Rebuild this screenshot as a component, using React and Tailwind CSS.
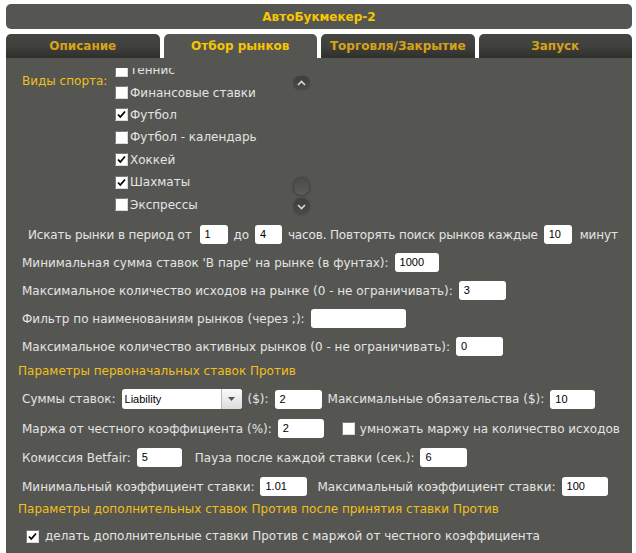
import React from "react";

const Input = ({ w, v }) => (
  <div
    className={`h-[19px] bg-white rounded-[3px] flex items-center pl-[5px] text-[11px] tracking-normal text-black font-['Liberation_Sans',sans-serif] shrink-0 ${w}`}
  >
    {v}
  </div>
);

const Check = ({ on }) => (
  <div className="w-[13px] h-[13px] bg-white border border-t-[#7a7a7a] border-l-[#7a7a7a] border-r-[#d8d8d8] border-b-[#d8d8d8] flex items-center justify-center shrink-0">
    {on && (
      <svg width="9" height="9" viewBox="0 0 9 9">
        <path d="M1 4.5 L3.3 7 L8 1.5" stroke="#000" strokeWidth="1.8" fill="none" />
      </svg>
    )}
  </div>
);

const Tab = ({ label, active }) => (
  <div
    className={`flex-1 h-[24px] rounded-t-[5px] flex items-center justify-center font-bold text-[12px] ${
      active
        ? "bg-[#555651] text-[#f7c600]"
        : "bg-gradient-to-b from-[#454642] via-[#40413d] to-[#2f302c] text-[#d6a318]"
    }`}
  >
    {label}
  </div>
);

const ScrollBtn = ({ up }) => (
  <div className="w-[17px] h-[17px] rounded-full bg-gradient-to-b from-[#3f403c] to-[#4a4b47] shadow-[0_0_1px_#2f302c] flex items-center justify-center">
    <svg width="9" height="6" viewBox="0 0 9 6">
      <path
        d={up ? "M1 5 L4.5 1.5 L8 5" : "M1 1 L4.5 4.5 L8 1"}
        stroke="#d8d8d8"
        strokeWidth="1.6"
        fill="none"
      />
    </svg>
  </div>
);

const sports = [
  ["Теннис", false],
  ["Финансовые ставки", false],
  ["Футбол", true],
  ["Футбол - календарь", false],
  ["Хоккей", true],
  ["Шахматы", true],
  ["Экспрессы", false],
];

export default function App() {
  return (
    <div className="w-[636px] h-[553px] bg-white overflow-hidden pt-[4px] pl-[6px] pr-[4px] font-['DejaVu_Sans',sans-serif] text-[12px] text-[#e4e4e4] whitespace-nowrap">
      <div className="h-[25px] rounded-[5px] bg-[#555651] flex items-center justify-center font-bold text-[12px] text-[#f7c600]">
        АвтоБукмекер-2
      </div>
      <div className="flex gap-[4px] mt-[5px]">
        <Tab label="Описание" />
        <Tab label="Отбор рынков" active />
        <Tab label="Торговля/Закрытие" />
        <Tab label="Запуск" />
      </div>
      <div className="h-[495px] bg-[#555651] pt-[10px] flex flex-col">
        {/* sports */}
        <div className="flex h-[147px]">
          <div className="w-[109px] pl-[16px] pt-[4px] text-[#f2bf1c]">Виды спорта:</div>
          <div className="w-[165px] h-[147px] overflow-hidden">
            <div className="-mt-[9px] flex flex-col">
              {sports.map(([n, on]) => (
                <div key={n} className="h-[22.4px] flex items-center gap-[2px]">
                  <Check on={on} />
                  <span>{n}</span>
                </div>
              ))}
            </div>
          </div>
          <div className="w-[17px] ml-[13px] flex flex-col items-center pt-[8px]">
            <ScrollBtn up />
            <div className="mt-[87px] w-[17px] h-[22px] rounded-[9px] bg-gradient-to-b from-[#4a4b47] to-[#5c5d59] border border-[#454642] shadow-[0_0_2px_#3a3b37]" />
            <div className="mt-[2px]">
              <ScrollBtn />
            </div>
          </div>
        </div>

        <div className="flex flex-col gap-[9px] mt-[10px] pl-[16px]">
          <div className="flex items-center gap-[6px] pl-[6px] tracking-[-0.15px]">
            <span>Искать рынки в период от</span>
            <Input w="w-[28px] ml-[2px]" v="1" />
            <span>до</span>
            <Input w="w-[27px]" v="4" />
            <span>часов. Повторять поиск рынков каждые</span>
            <Input w="w-[28px]" v="10" />
            <span className="ml-[2px]">минут</span>
          </div>
          <div className="flex items-center gap-[6px]">
            <span>Минимальная сумма ставок 'В паре' на рынке (в фунтах):</span>
            <Input w="w-[44px]" v="1000" />
          </div>
          <div className="flex items-center gap-[6px]">
            <span>Максимальное количество исходов на рынке (0 - не ограничивать):</span>
            <Input w="w-[47px]" v="3" />
          </div>
          <div className="flex items-center gap-[6px]">
            <span>Фильтр по наименованиям рынков (через ;):</span>
            <Input w="w-[95px]" v="" />
          </div>
          <div className="flex items-center gap-[6px]">
            <span>Максимальное количество активных рынков (0 - не ограничивать):</span>
            <Input w="w-[47px]" v="0" />
          </div>
        </div>

        <div className="mt-[7px] pl-[12px] h-[16px] leading-[16px] text-[#f2bf1c]">
          Параметры первоначальных ставок Против
        </div>

        <div className="flex flex-col gap-[10px] mt-[10px] pl-[16px]">
          <div className="flex items-center gap-[6px]">
            <span>Суммы ставок:</span>
            <div className="w-[120px] h-[20px] bg-white rounded-[3px] flex items-stretch shrink-0">
              <div className="flex-1 flex items-center pl-[3px] text-[11px] text-black font-['Liberation_Sans',sans-serif]">
                Liability
              </div>
              <div className="w-[21px] border-l border-[#b8b8b8] bg-gradient-to-b from-[#fafafa] to-[#dcdcdc] rounded-r-[3px] flex items-center justify-center">
                <svg width="7" height="4" viewBox="0 0 7 4">
                  <path d="M0 0 L7 0 L3.5 4 Z" fill="#555" />
                </svg>
              </div>
            </div>
            <span>($):</span>
            <Input w="w-[47px]" v="2" />
            <span>Максимальные обязательства ($):</span>
            <Input w="w-[45px]" v="10" />
          </div>
          <div className="flex items-center gap-[6px]">
            <span>Маржа от честного коэффициента (%):</span>
            <Input w="w-[46px]" v="2" />
            <div className="ml-[12px]">
              <Check />
            </div>
            <span className="ml-[-1px]">умножать маржу на количество исходов</span>
          </div>
          <div className="flex items-center gap-[6px]">
            <span>Комиссия Betfair:</span>
            <Input w="w-[45px]" v="5" />
            <span className="ml-[7px]">Пауза после каждой ставки (сек.):</span>
            <Input w="w-[47px]" v="6" />
          </div>
          <div className="flex items-center gap-[6px]">
            <span>Минимальный коэффициент ставки:</span>
            <Input w="w-[47px]" v="1.01" />
            <span className="ml-[4px]">Максимальный коэффициент ставки:</span>
            <Input w="w-[46px]" v="100" />
          </div>
        </div>

        <div className="mt-[5px] pl-[12px] h-[16px] leading-[16px] text-[#f2bf1c]">
          Параметры дополнительных ставок Против после принятия ставки Против
        </div>
        <div className="mt-[10px] pl-[20px] flex items-center gap-[6px]">
          <Check on />
          <span>делать дополнительные ставки Против с маржой от честного коэффициента</span>
        </div>
      </div>
    </div>
  );
}
